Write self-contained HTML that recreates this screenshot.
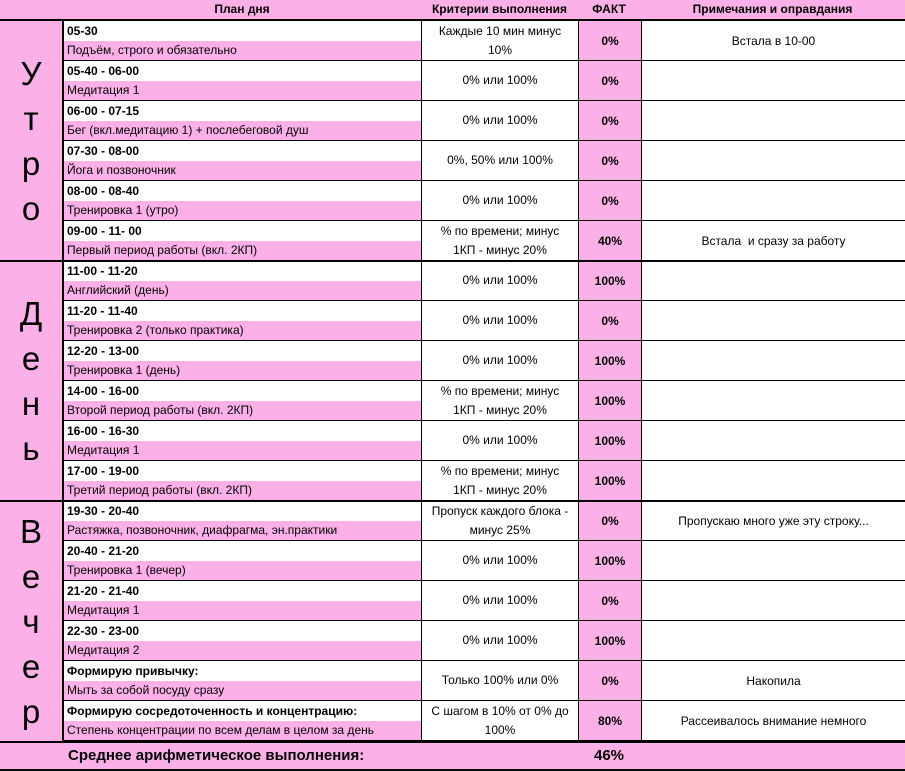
<!DOCTYPE html>
<html><head><meta charset="utf-8"><style>
body{margin:0;background:#fff;font-family:"Liberation Sans",sans-serif;font-size:12px;width:905px;height:771px;position:relative;overflow:hidden}
.hd{position:absolute;left:0;top:0;width:905px;height:21px;background:#fbb0e8;border-bottom:2px solid #000;box-sizing:border-box;font-weight:bold;display:flex;line-height:19px}
.hd div{text-align:center}
.let{position:absolute;left:0;width:64px;background:#fbb0e8;border-right:2px solid #000;box-sizing:border-box;display:flex;flex-direction:column;justify-content:center;align-items:center;font-size:33px;line-height:45px}
.b{position:absolute;left:64px;width:841px;height:40px;display:flex;border-bottom:1px solid #000;box-sizing:border-box}
.p{width:357px;border-right:1px solid #000;flex:none}
.t{height:20px;line-height:20px;font-weight:bold;padding-left:3px;background:#fff;white-space:nowrap}
.d{height:19px;line-height:19px;padding-left:3px;background:#fbb0e8;white-space:nowrap}
.c{width:157px;flex:none;border-right:1px solid #000;display:flex;align-items:center;justify-content:center;text-align:center;line-height:19px;padding:0 8px;box-sizing:border-box}
.f{width:62px;flex:none;border-right:1px solid #000;background:#fbb0e8;font-weight:bold;display:flex;align-items:center;justify-content:center}
.n{flex:1;display:flex;align-items:center;justify-content:center}
.sep{position:absolute;left:0;width:905px;height:2px;background:#000}
.ft{position:absolute;left:0;top:741px;width:905px;height:30px;background:#fbb0e8;border-top:2px solid #000;border-bottom:2px solid #000;box-sizing:border-box;font-weight:bold;font-size:15px;line-height:26px}
</style></head><body>
<div class="hd"><div style="width:63px"></div><div style="width:358px">План дня</div><div style="width:157px">Критерии выполнения</div><div style="width:62px">ФАКТ</div><div style="width:265px">Примечания и оправдания</div></div>

<div class="let" style="top:21px;height:240px"><span>У</span><span>т</span><span>р</span><span>о</span></div>
<div class="let" style="top:261px;height:240px"><span>Д</span><span>е</span><span>н</span><span>ь</span></div>
<div class="let" style="top:501px;height:240px"><span>В</span><span>е</span><span>ч</span><span>е</span><span>р</span></div>

<div class="b" style="top:21px"><div class="p"><div class="t">05-30</div><div class="d">Подъём, строго и обязательно</div></div><div class="c">Каждые 10 мин минус 10%</div><div class="f">0%</div><div class="n">Встала в 10-00</div></div>
<div class="b" style="top:61px"><div class="p"><div class="t">05-40 - 06-00</div><div class="d">Медитация 1</div></div><div class="c">0% или 100%</div><div class="f">0%</div><div class="n"></div></div>
<div class="b" style="top:101px"><div class="p"><div class="t">06-00 - 07-15</div><div class="d">Бег (вкл.медитацию 1) + послебеговой душ</div></div><div class="c">0% или 100%</div><div class="f">0%</div><div class="n"></div></div>
<div class="b" style="top:141px"><div class="p"><div class="t">07-30 - 08-00</div><div class="d">Йога и позвоночник</div></div><div class="c">0%, 50% или 100%</div><div class="f">0%</div><div class="n"></div></div>
<div class="b" style="top:181px"><div class="p"><div class="t">08-00 - 08-40</div><div class="d">Тренировка 1 (утро)</div></div><div class="c">0% или 100%</div><div class="f">0%</div><div class="n"></div></div>
<div class="b" style="top:221px"><div class="p"><div class="t">09-00 - 11- 00</div><div class="d">Первый период работы (вкл. 2КП)</div></div><div class="c">% по времени; минус 1КП - минус 20%</div><div class="f">40%</div><div class="n">Встала &nbsp;и сразу за работу</div></div>

<div class="b" style="top:261px"><div class="p"><div class="t">11-00 - 11-20</div><div class="d">Английский (день)</div></div><div class="c">0% или 100%</div><div class="f">100%</div><div class="n"></div></div>
<div class="b" style="top:301px"><div class="p"><div class="t">11-20 - 11-40</div><div class="d">Тренировка 2 (только практика)</div></div><div class="c">0% или 100%</div><div class="f">0%</div><div class="n"></div></div>
<div class="b" style="top:341px"><div class="p"><div class="t">12-20 - 13-00</div><div class="d">Тренировка 1 (день)</div></div><div class="c">0% или 100%</div><div class="f">100%</div><div class="n"></div></div>
<div class="b" style="top:381px"><div class="p"><div class="t">14-00 - 16-00</div><div class="d">Второй период работы (вкл. 2КП)</div></div><div class="c">% по времени; минус 1КП - минус 20%</div><div class="f">100%</div><div class="n"></div></div>
<div class="b" style="top:421px"><div class="p"><div class="t">16-00 - 16-30</div><div class="d">Медитация 1</div></div><div class="c">0% или 100%</div><div class="f">100%</div><div class="n"></div></div>
<div class="b" style="top:461px"><div class="p"><div class="t">17-00 - 19-00</div><div class="d">Третий период работы (вкл. 2КП)</div></div><div class="c">% по времени; минус 1КП - минус 20%</div><div class="f">100%</div><div class="n"></div></div>

<div class="b" style="top:501px"><div class="p"><div class="t">19-30 - 20-40</div><div class="d">Растяжка, позвоночник, диафрагма, эн.практики</div></div><div class="c">Пропуск каждого блока - минус 25%</div><div class="f">0%</div><div class="n">Пропускаю много уже эту строку...</div></div>
<div class="b" style="top:541px"><div class="p"><div class="t">20-40 - 21-20</div><div class="d">Тренировка 1 (вечер)</div></div><div class="c">0% или 100%</div><div class="f">100%</div><div class="n"></div></div>
<div class="b" style="top:581px"><div class="p"><div class="t">21-20 - 21-40</div><div class="d">Медитация 1</div></div><div class="c">0% или 100%</div><div class="f">0%</div><div class="n"></div></div>
<div class="b" style="top:621px"><div class="p"><div class="t">22-30 - 23-00</div><div class="d">Медитация 2</div></div><div class="c">0% или 100%</div><div class="f">100%</div><div class="n"></div></div>
<div class="b" style="top:661px"><div class="p"><div class="t">Формирую привычку:</div><div class="d">Мыть за собой посуду сразу</div></div><div class="c">Только 100% или 0%</div><div class="f">0%</div><div class="n">Накопила</div></div>
<div class="b" style="top:701px"><div class="p"><div class="t">Формирую сосредоточенность и концентрацию:</div><div class="d">Степень концентрации по всем делам в целом за день</div></div><div class="c">С шагом в 10% от 0% до 100%</div><div class="f">80%</div><div class="n">Рассеивалось внимание немного</div></div>

<div class="sep" style="top:260px"></div>
<div class="sep" style="top:500px"></div>

<div class="ft"><span style="position:absolute;left:68px">Среднее арифметическое выполнения:</span><span style="position:absolute;left:594px">46%</span></div>
</body></html>
